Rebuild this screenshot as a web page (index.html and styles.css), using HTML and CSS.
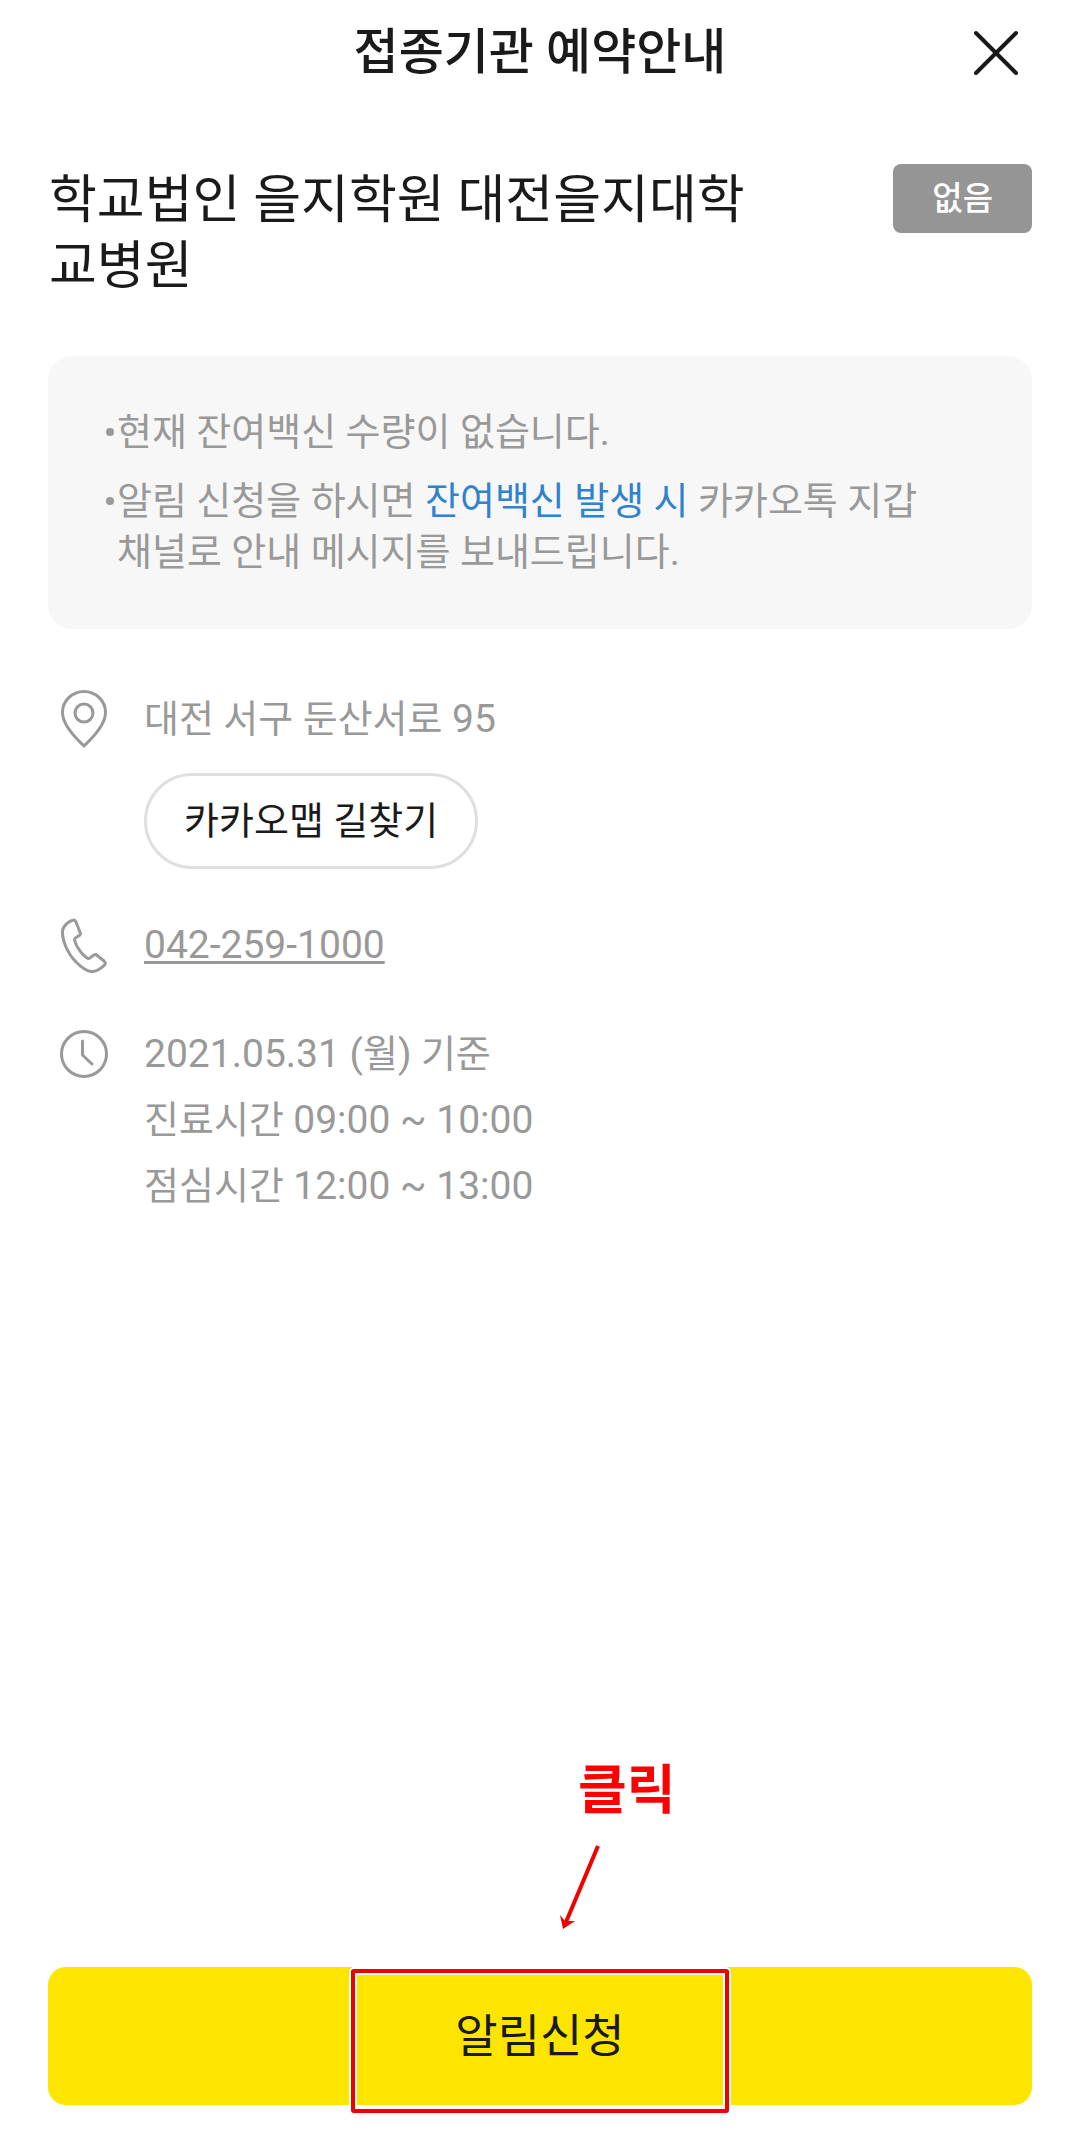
FILE: index.html
```html
<!DOCTYPE html>
<html lang="ko">
<head>
  <meta charset="utf-8">
  <meta name="viewport" content="width=device-width, initial-scale=1">
  <title>접종기관 예약안내</title>
  <link rel="stylesheet" href="styles.css">
</head>
<body>
  <div class="page">
    <header class="header">
      <h1 class="header-title">접종기관 예약안내</h1>
      <button class="close" type="button" aria-label="닫기">
        <svg width="48" height="48" viewBox="0 0 48 48" fill="none" stroke="#1a1a1a" stroke-width="4" stroke-linecap="round"><path d="M4 4l40 40M44 4L4 44"/></svg>
      </button>
    </header>

    <main class="main">
      <div class="facility">
        <h2 class="facility-name">학교법인 을지학원 대전을지대학교병원</h2>
        <span class="badge">없음</span>
      </div>

      <ul class="notice">
        <li class="notice-item"><p>현재 잔여백신 수량이 없습니다.</p></li>
        <li class="notice-item"><p>알림 신청을 하시면 <em class="highlight">잔여백신 발생 시</em> 카카오톡 지갑 채널로 안내 메시지를 보내드립니다.</p></li>
      </ul>

      <div class="info">
        <section class="info-row">
          <svg class="info-icon" viewBox="0 0 48 66" fill="none" stroke="#999" stroke-width="3" stroke-linejoin="round"><path d="M24 61C20 57 2.500 42 2.500 27.500a21.500 21 0 0 1 43 0C45.500 42 28 57 24 61z"/><circle cx="24" cy="28" r="9"/></svg>
          <div class="info-body">
            <p>대전 서구 둔산서로 <span class="num">95</span></p>
            <button class="map-button" type="button">카카오맵 길찾기</button>
          </div>
        </section>
        <section class="info-row">
          <svg class="info-icon" viewBox="0 0 48 66" fill="none" stroke="#999" stroke-width="3" stroke-linejoin="round"><path d="M13.500 9C9 10 3 14.500 2.500 20C2 30 8 43 16 51C21 56 27 60 31 60.500C36 61 42 57 45 53.500C46 52 45 51 44 50L36 43.500C32 43 31 48 28 47.500C23 45 16 36 14.500 29C14 26 21 25 20.500 22.500L16 11Q15 8.500 13.500 9z"/></svg>
          <div class="info-body"><a class="phone num" href="tel:042-259-1000">042-259-1000</a></div>
        </section>
        <section class="info-row">
          <svg class="info-icon" viewBox="0 0 48 66" fill="none" stroke="#999" stroke-width="3" stroke-linecap="round" stroke-linejoin="round"><circle cx="24" cy="34" r="22.500"/><path d="M22.500 21v14l9.500 9"/></svg>
          <div class="info-body">
            <p><span class="num">2021.05.31 (</span>월<span class="num">)</span> 기준</p>
            <p>진료시간 <span class="num">09:00 ~ 10:00</span></p>
            <p>점심시간 <span class="num">12:00 ~ 13:00</span></p>
          </div>
        </section>
      </div>
    </main>

    <footer class="footer">
      <button class="apply" type="button">알림신청</button>
      <div class="callout">
        <strong class="callout-label">클릭</strong>
        <svg class="callout-arrow" width="44" height="88" viewBox="0 0 44 88"><path d="M39 3L7 79" fill="none" stroke="#f00000" stroke-width="4"/><path d="M4 86L1 72L6 78L16 78z" fill="#f00000"/></svg>
        <div class="callout-frame"></div>
      </div>
    </footer>
  </div>
</body>
</html>
```

FILE: styles.css
```css
* {
  box-sizing: border-box;
}

body {
  margin: 0;
  background: #fff;
  color: #1a1a1a;
  font-family: Roboto, "Noto Sans CJK KR", sans-serif;
  font-size: 38px;
}

h1, h2, p, ul {
  margin: 0;
  padding: 0;
}

button {
  border: 0;
  background: none;
  color: inherit;
  font-family: inherit;
  cursor: pointer;
}

.page {
  display: flex;
  flex-direction: column;
  min-height: 100vh;
}

.header {
  display: grid;
  grid-template-columns: 48px 1fr 48px;
  align-items: center;
  height: 106px;
  padding: 0 60px;
}

.header-title {
  grid-column: 2;
  font-size: 49px;
  font-weight: 500;
  line-height: 66px;
  text-align: center;
}

.close {
  display: flex;
  padding: 0;
}

.main {
  padding: 58px 48px;
}

.facility {
  display: flex;
  align-items: flex-start;
  justify-content: space-between;
  gap: 120px;
}

.facility-name {
  flex: 1;
  padding: 4px 0 0 1px;
  font-size: 52px;
  font-weight: 400;
  line-height: 66px;
}

.badge {
  padding: 0 39px;
  border-radius: 8px;
  background: #959595;
  color: #fff;
  font-size: 33px;
  font-weight: 500;
  line-height: 69px;
}

.notice {
  display: flex;
  flex-direction: column;
  gap: 18px;
  margin-top: 56px;
  padding: 51px 58px;
  border-radius: 24px;
  background: #f7f7f7;
  color: #999;
  line-height: 51px;
  list-style: none;
  word-break: keep-all;
}

.notice-item {
  display: flex;
  gap: 3px;
}

.notice-item::before {
  content: "";
  flex: none;
  width: 8px;
  height: 8px;
  margin-top: 21px;
  border-radius: 50%;
  background: #999;
}

.highlight {
  color: #2e83cc;
  font-style: normal;
}

.info {
  display: flex;
  flex-direction: column;
  gap: 42px;
  margin-top: 56px;
  padding-left: 12px;
  color: #999;
  line-height: 66px;
}

.info-row {
  display: flex;
  align-items: flex-start;
  gap: 36px;
}

.info-icon {
  width: 48px;
  height: 66px;
}

.info-body {
  padding-top: 1px;
}

.num {
  font-size: 39px;
}

.phone {
  display: block;
  color: inherit;
  text-decoration-thickness: 3px;
  text-underline-offset: 3px;
}

.map-button {
  display: block;
  margin-top: 21px;
  padding: 0 37px;
  border: 3px solid #dfdfdf;
  border-radius: 48px;
  color: #1a1a1a;
  font-size: 38px;
  line-height: 90px;
}

.footer {
  position: relative;
  margin-top: auto;
  padding: 0 48px 31px;
}

.apply {
  display: block;
  width: 100%;
  padding: 0;
  border-radius: 18px;
  background: #fee500;
  font-size: 46px;
  line-height: 138px;
}

/* Red guide marking drawn over the button */
.callout {
  position: absolute;
  bottom: 23px;
  left: 50%;
  width: 378px;
  margin-left: -189px;
  pointer-events: none;
}

.callout-label {
  display: block;
  padding-left: 227px;
  color: #f00;
  font-size: 53px;
  font-weight: 700;
  line-height: 60px;
}

.callout-arrow {
  display: block;
  margin: 22px 0 38px 208px;
}

.callout-frame {
  height: 144px;
  border: 4px solid #f00000;
  border-radius: 3px;
  box-shadow: 0 0 0 2px #fff, inset 0 0 0 2px #fff;
}
```
